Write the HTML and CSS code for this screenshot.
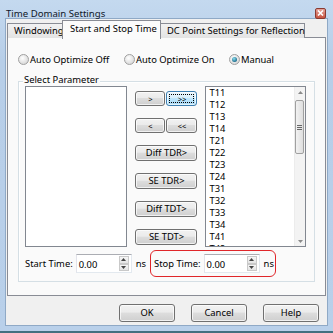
FILE: index.html
```html
<!DOCTYPE html>
<html>
<head>
<meta charset="utf-8">
<link rel="stylesheet" href="styles.css">
</head>
<body>
<div class="window">
  <div class="titlebar">
    <span class="title">Time Domain Settings</span>
    <span class="close"><svg width="7" height="6" viewBox="0 0 7 6"><path d="M1 0.5 L6 5.5 M6 0.5 L1 5.5" stroke="#fff" stroke-width="1.6"/></svg></span>
  </div>
  <div class="client">
    <div class="tabs">
      <div class="tab t1">Windowing</div>
      <div class="tab active">Start and Stop Time</div>
      <div class="tab t3">DC Point Settings for Reflection</div>
    </div>
    <div class="panel">
      <div class="radios">
        <label class="radio r1"><span class="dot"></span>Auto Optimize Off</label>
        <label class="radio r2"><span class="dot"></span>Auto Optimize On</label>
        <label class="radio r3"><span class="dot on"></span>Manual</label>
      </div>
      <div class="group">
        <span class="legend">Select Parameter</span>
        <div class="lists">
          <div class="listbox left"></div>
          <div class="btncol">
            <div class="pair"><button class="btn">&gt;</button><button class="btn focus">&gt;&gt;</button></div>
            <div class="pair"><button class="btn">&lt;</button><button class="btn">&lt;&lt;</button></div>
            <button class="btn wide">Diff TDR&gt;</button>
            <button class="btn wide">SE TDR&gt;</button>
            <button class="btn wide">Diff TDT&gt;</button>
            <button class="btn wide">SE TDT&gt;</button>
          </div>
          <div class="listbox right">
            <div class="items">
              <div>T11</div><div>T12</div><div>T13</div><div>T14</div>
              <div>T21</div><div>T22</div><div>T23</div><div>T24</div>
              <div>T31</div><div>T32</div><div>T33</div><div>T34</div>
              <div>T41</div><div>T42</div>
            </div>
            <div class="vscroll">
              <div class="sarrow"><svg width="5" height="3" viewBox="0 0 5 3"><path d="M0 3 L2.5 0 L5 3Z" fill="#8a8a8a"/></svg></div>
              <div class="track"><div class="thumb"><span class="grip"></span></div></div>
              <div class="sarrow"><svg width="5" height="3" viewBox="0 0 5 3"><path d="M0 0 L2.5 3 L5 0Z" fill="#8a8a8a"/></svg></div>
            </div>
          </div>
        </div>
        <div class="times">
          <span class="lbl">Start Time:</span>
          <div class="spin"><span class="val">0.00</span><span class="spinbtns"><span class="sb"><svg width="5" height="3" viewBox="0 0 5 3"><path d="M0 3 L2.5 0 L5 3Z" fill="#444"/></svg></span><span class="sb"><svg width="5" height="3" viewBox="0 0 5 3"><path d="M0 0 L2.5 3 L5 0Z" fill="#444"/></svg></span></span></div>
          <span class="ns">ns</span>
          <div class="stopbox">
            <span class="lbl">Stop Time:</span>
            <div class="spin"><span class="val">0.00</span><span class="spinbtns"><span class="sb"><svg width="5" height="3" viewBox="0 0 5 3"><path d="M0 3 L2.5 0 L5 3Z" fill="#444"/></svg></span><span class="sb"><svg width="5" height="3" viewBox="0 0 5 3"><path d="M0 0 L2.5 3 L5 0Z" fill="#444"/></svg></span></span></div>
            <span class="ns">ns</span>
          </div>
        </div>
      </div>
    </div>
    <div class="actions">
      <button class="btn big">OK</button>
      <button class="btn big">Cancel</button>
      <button class="btn big">Help</button>
    </div>
  </div>
</div>
</body>
</html>
```
FILE: styles.css
```css
* { box-sizing: border-box; }
html, body { margin: 0; padding: 0; background: #fff; }
body { font-family: "Noto Sans", "Open Sans", sans-serif; font-size: 9.4px; color: #000; }

.window {
  width: 333px; height: 333px;
  background: linear-gradient(#c4d9ef, #b7cee8 60px, #b9d0ea);
  padding: 18px 5px 5px 5px;
  position: relative;
  display: flex; flex-direction: column;
  border-bottom: 2px solid #43707f;
}
.titlebar {
  position: absolute; left: 0; top: 0; right: 0; height: 18px;
  display: flex; align-items: center; justify-content: space-between;
  padding: 0 6px 0 6px;
}
.title { font-size: 9.6px; color: #101828; line-height: 12px; margin-top: 9px; }
.close {
  width: 11px; height: 11px; margin-top: 8px; margin-right: 1px;
  background: linear-gradient(#e6a49a, #c8523f);
  border: 1px solid #8a3a30; border-radius: 2px;
  display: flex; align-items: center; justify-content: center;
}
.client {
  flex: 1;
  background: #f0f0f0;
  border: 1px solid #8fa9c6;
  display: flex; flex-direction: column;
  padding-top: 1px;
}
.tabs { display: flex; align-items: flex-end; padding-left: 1px; height: 18px; position: relative; z-index: 2; }
.tab {
  height: 15px; line-height: 14px;
  border: 1px solid #898c95; border-bottom: none;
  background: linear-gradient(#f2f2f2, #e3e3e3);
  padding: 0 6px; white-space: nowrap;
  margin-right: -1px;
}
.t1 { width: 57px; }
.t3 { width: 145px; }
.tab.active {
  width: 99px; line-height: 16px;
  background: #fbfbfb; position: relative; z-index: 3;
  margin-left: -1px; margin-right: -1px; padding-left: 7px;
  height: 19px; margin-bottom: -1px;
}
.panel {
  margin: -1px 1px 0 1px;
  height: 259px;
  border: 1px solid #898c95;
  background: #fafafa;
  padding: 14px 10px 0 10px;
  position: relative; z-index: 1;
}
.radios { display: flex; height: 15px; align-items: center; }
.radio { display: flex; align-items: center; gap: 1px; white-space: nowrap; }
.r1 { width: 106px; }
.r2 { width: 105px; }
.dot {
  width: 11px; height: 11px; border-radius: 50%;
  border: 1px solid #a0a0a0;
  background: radial-gradient(circle at 40% 35%, #ffffff, #dcdcdc 70%, #c8c8c8);
  position: relative;
}
.dot.on::after {
  content: ""; position: absolute; left: 2px; top: 2px; width: 5px; height: 5px; border-radius: 50%;
  background: radial-gradient(circle at 40% 35%, #8fe0f0, #1f6f8f 70%, #0f4a66);
}
.group {
  margin-top: 14px;
  border: 1px solid #d5dfe5;
  box-shadow: inset 1px 1px 0 #fff;
  height: 201px;
  padding: 4px 8px 0 6px;
  position: relative;
}
.legend {
  position: absolute; left: 4px; top: -9px; background: #fafafa; padding: 0 1px; line-height: 13px;
}
.lists { display: flex; gap: 8px; height: 161px; }
.listbox { border: 1px solid #828790; background: #fff; height: 161px; }
.listbox.left { width: 104px; }
.listbox.right { width: 102px; display: flex; }
.items { flex: 1; overflow: hidden; padding-left: 3px; }
.items div { height: 12px; line-height: 12px; }
.vscroll { width: 11px; display: flex; flex-direction: column; background: #f3f3f3; border-left: 1px solid #ececec; }
.sarrow { height: 10px; display: flex; align-items: center; justify-content: center; }
.track { flex: 1; padding-top: 3px; }
.thumb {
  height: 54px; margin-left: 0; width: 9px;
  border: 1px solid #a0a0a0; border-radius: 2px;
  background: linear-gradient(90deg, #f2f2f2, #dedede);
  display: flex; align-items: center; justify-content: center;
}
.grip { width: 5px; height: 5px; background: repeating-linear-gradient(#666 0 1px, transparent 1px 2px); }
.btncol { width: 62px; display: flex; flex-direction: column; gap: 12px; padding-top: 5px; }
.pair { display: grid; grid-template-columns: 30px 31px; gap: 1px; }
.btn {
  font: inherit; color: #000; margin: 0; padding: 0;
  height: 15px; line-height: 12px;
  border: 1px solid #707070; border-radius: 3px;
  background: linear-gradient(#f2f2f2 0%, #ebebeb 45%, #dddddd 50%, #cfcfcf 100%);
  box-shadow: inset 0 0 0 1px rgba(255,255,255,0.7);
}
.pair .btn { font-size: 7.5px; }
.btn.focus {
  border-color: #3c7fb1;
  background: linear-gradient(#eaf6fd 0%, #d9f0fc 45%, #bee6fd 50%, #a7d9f5 100%);
  outline: 1px dotted #000; outline-offset: -4px;
}
.btn.wide { width: 62px; height: 16px; }
.times { display: flex; align-items: center; margin-top: 3px; height: 27px; }
.lbl { white-space: nowrap; }
.spin {
  width: 56px; height: 19px; margin-left: 3px;
  border: 1px solid #abadb3; border-color: #abadb3 #e3e9ef #e3e9ef #e2e3ea;
  background: #fff; display: flex; align-items: center;
}
.val { flex: 1; padding-left: 2px; line-height: 14px; padding-top: 2px; }
.spinbtns { width: 10px; height: 15px; display: flex; flex-direction: column; margin-right: 2px; }
.sb { flex: 1; display: flex; align-items: center; justify-content: center; border: 1px solid #c9c9c9; background: linear-gradient(#f6f6f6, #e4e4e4); }
.ns { margin-left: 4px; }
.stopbox {
  margin-left: 4px; height: 27px; width: 126px;
  border: 1px solid #e0262a; border-radius: 6px;
  display: flex; align-items: center; padding-left: 3px;
}
.actions { display: flex; justify-content: flex-end; gap: 16px; padding: 8px 8px 0 0; }
.btn.big { width: 56px; height: 18px; }
```
